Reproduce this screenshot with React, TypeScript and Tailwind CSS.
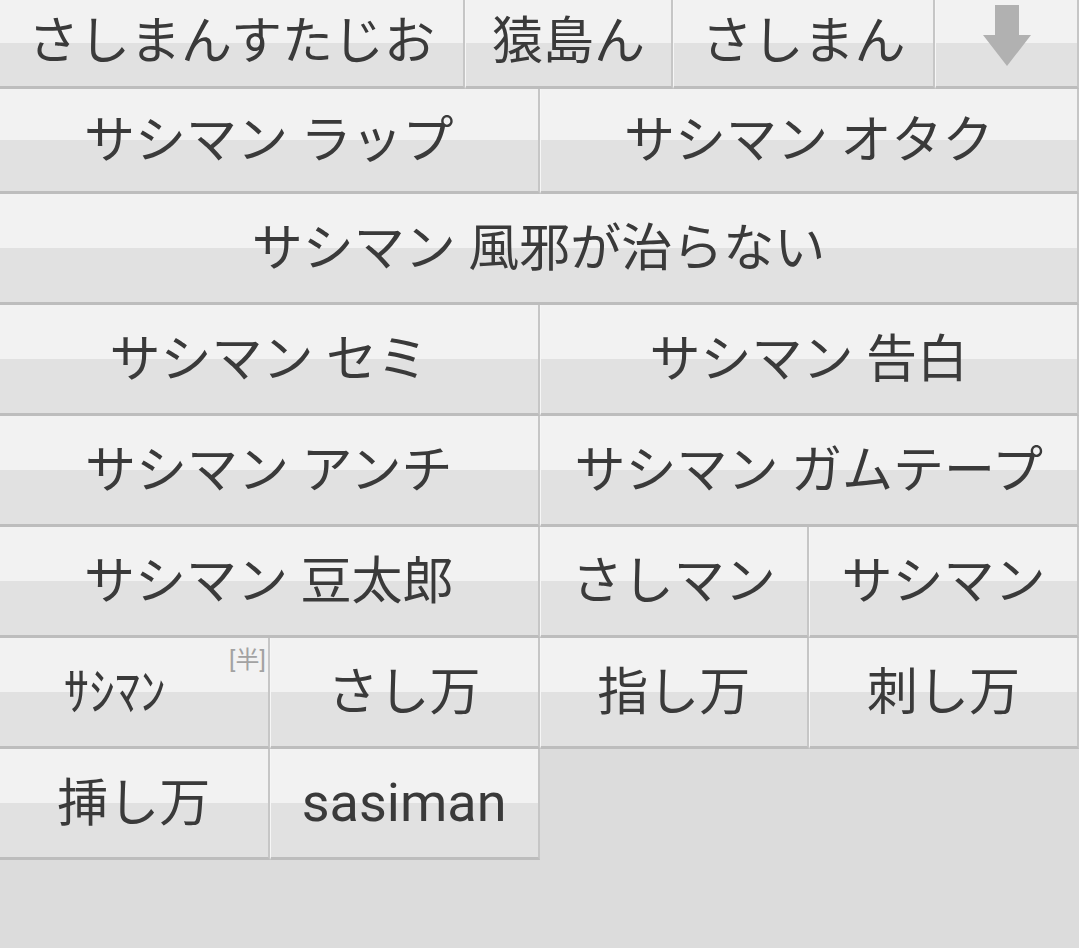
import type { ReactNode } from "react";

type KeyProps = {
  children?: ReactNode;
  className?: string;
  first?: boolean;
};

function Key({ children, className = "", first = false }: KeyProps) {
  return (
    <div
      className={`relative flex items-center justify-center whitespace-nowrap border-b-[3px] border-b-[#bdbdbd] border-r-2 border-r-[#c6c6c6] bg-[linear-gradient(to_bottom,#f2f2f2_50%,#e1e1e1_50%)] text-[51px] leading-none text-[#3a3a3a] ${
        first ? "" : "border-l border-l-[#f6f6f6]"
      } ${className}`}
    >
      {children}
    </div>
  );
}

function DownArrow() {
  return (
    <svg width="50" height="62" viewBox="0 0 50 62" className="mb-[14px]">
      <path d="M13 0h24v30h12L25 61 1 30h12z" fill="#b1b1b1" />
    </svg>
  );
}

const row = "grid h-[111px] grid-cols-4";
const top = "bg-[linear-gradient(to_bottom,#f2f2f2_42%,#e1e1e1_42%)]";

export default function App() {
  return (
    <div className="flex h-[948px] w-[1079px] flex-col overflow-hidden bg-[#dcdcdc] font-['Roboto','Noto_Sans_CJK_JP',sans-serif]">
      {/* first row is scrolled partly off the top */}
      <div className="flex h-[89px]">
        <Key first className={`w-[465px] pb-[4px] ${top}`}>
          さしまんすたじお
        </Key>
        <Key className={`w-[208px] pb-[4px] ${top}`}>猿島ん</Key>
        <Key className={`w-[262px] pb-[4px] ${top}`}>さしまん</Key>
        <Key className={`flex-1 ${top}`}>
          <DownArrow />
        </Key>
      </div>

      <div className="grid h-[105px] grid-cols-2">
        <Key first>サシマン ラップ</Key>
        <Key>サシマン オタク</Key>
      </div>

      <div className={row}>
        <Key first className="col-span-4">
          サシマン 風邪が治らない
        </Key>
      </div>

      <div className={row}>
        <Key first className="col-span-2">
          サシマン セミ
        </Key>
        <Key className="col-span-2">サシマン 告白</Key>
      </div>

      <div className={row}>
        <Key first className="col-span-2">
          サシマン アンチ
        </Key>
        <Key className="col-span-2">サシマン ガムテープ</Key>
      </div>

      <div className={row}>
        <Key first className="col-span-2">
          サシマン 豆太郎
        </Key>
        <Key>さしマン</Key>
        <Key>サシマン</Key>
      </div>

      <div className={row}>
        <Key first className="pr-[38px]">
          ｻｼﾏﾝ
          <span className="absolute right-[2px] top-[10px] text-[24px] text-[#a2a2a2]">
            [半]
          </span>
        </Key>
        <Key>さし万</Key>
        <Key>指し万</Key>
        <Key>刺し万</Key>
      </div>

      <div className={row}>
        <Key first>挿し万</Key>
        <Key className="text-[54px]">sasiman</Key>
      </div>
    </div>
  );
}
